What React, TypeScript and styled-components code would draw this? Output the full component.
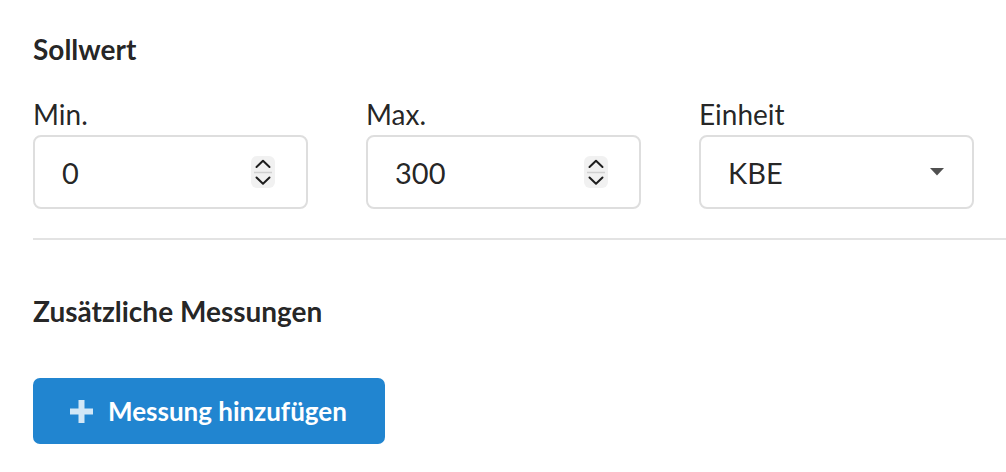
import React from 'react';
import styled, { createGlobalStyle } from 'styled-components';

const GlobalStyle = createGlobalStyle`
  body {
    margin: 0;
    background: #ffffff;
    font-family: Lato, "Noto Sans", sans-serif;
    color: rgba(0, 0, 0, 0.87);
  }
`;

const Page = styled.div`
  padding: 33px 0 0 33px;
  width: 973px;
`;

const Header = styled.h4`
  margin: 0;
  font-size: 28px;
  font-weight: 700;
  line-height: 32px;
`;

const FieldRow = styled.div`
  display: grid;
  grid-template-columns: 275px 275px 275px;
  column-gap: 58px;
  margin-top: 34px;
`;

const Field = styled.div`
  display: flex;
  flex-direction: column;
`;

const Label = styled.label`
  font-size: 28px;
  line-height: 30px;
  margin-bottom: 6px;
`;

const Box = styled.div<{ $right: number }>`
  box-sizing: border-box;
  height: 74px;
  border: 2px solid #dedede;
  border-radius: 8px;
  display: flex;
  align-items: center;
  justify-content: space-between;
  padding: 0 ${(p) => p.$right}px 0 27px;
  font-size: 29px;
`;

const Value = styled.span`
  color: rgba(0, 0, 0, 0.87);
`;

const Divider = styled.hr`
  margin: 29px 0 0;
  border: 0;
  border-top: 2px solid #e3e3e3;
  width: 973px;
`;

const Section = styled.div`
  margin-top: 55px;
`;

const Button = styled.button`
  margin-top: 51px;
  box-sizing: border-box;
  width: 352px;
  height: 66px;
  border: 0;
  border-radius: 7px;
  background: #2185d0;
  color: #ffffff;
  font-family: Lato, "Noto Sans", sans-serif;
  font-size: 26px;
  font-weight: 700;
  display: flex;
  align-items: center;
  padding: 0 0 0 37px;
  gap: 15px;
`;

function Spinner() {
  return (
    <svg width="24" height="32" viewBox="0 0 24 32">
      <rect x="0" y="0" width="24" height="32" rx="6" fill="#f1f1f1" />
      <path d="M5.5 11 L12 4.8 L18.5 11" fill="none" stroke="#1e1e1e" strokeWidth="2" strokeLinecap="round" strokeLinejoin="round" />
      <line x1="3" y1="16.5" x2="21" y2="16.5" stroke="#d0d0d0" strokeWidth="1.5" />
      <path d="M5.5 21.5 L12 27.7 L18.5 21.5" fill="none" stroke="#1e1e1e" strokeWidth="2" strokeLinecap="round" strokeLinejoin="round" />
    </svg>
  );
}

function Caret() {
  return (
    <svg width="14" height="8" viewBox="0 0 14 8">
      <path d="M0 0 H14 L7 7.5 Z" fill="#505050" />
    </svg>
  );
}

function Plus() {
  return (
    <svg width="23" height="23" viewBox="0 0 23 23">
      <path d="M8.5 0 H14.5 V8.5 H23 V14.5 H14.5 V23 H8.5 V14.5 H0 V8.5 H8.5 Z" fill="rgba(255,255,255,0.8)" />
    </svg>
  );
}

export default function App() {
  return (
    <>
      <GlobalStyle />
      <Page>
        <Header>Sollwert</Header>
        <FieldRow>
          <Field>
            <Label>Min.</Label>
            <Box $right={31}>
              <Value>0</Value>
              <Spinner />
            </Box>
          </Field>
          <Field>
            <Label>Max.</Label>
            <Box $right={31}>
              <Value>300</Value>
              <Spinner />
            </Box>
          </Field>
          <Field>
            <Label>Einheit</Label>
            <Box $right={28}>
              <Value>KBE</Value>
              <Caret />
            </Box>
          </Field>
        </FieldRow>
        <Divider />
        <Section>
          <Header>Zusätzliche Messungen</Header>
          <Button>
            <Plus />
            Messung hinzufügen
          </Button>
        </Section>
      </Page>
    </>
  );
}
